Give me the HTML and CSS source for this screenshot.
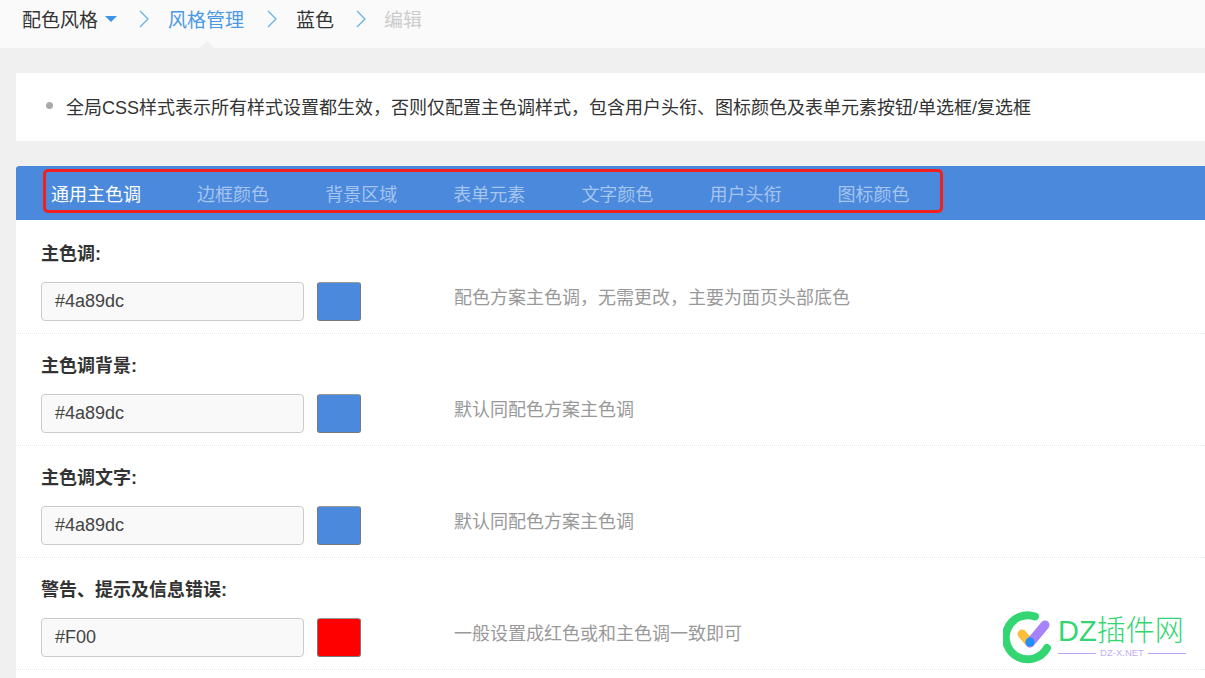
FILE: index.html
```html
<!DOCTYPE html>
<html lang="zh-CN">
<head>
  <meta charset="UTF-8" />
  <title>配色风格</title>
  <link rel="stylesheet" href="styles.css">
</head>
<body>
  <div class="crumbs">
    <span class="crumb">配色风格<i class="caret"></i></span>
    <svg class="sep" width="10" height="18" viewBox="0 0 10 18"><path d="M1 1l8 8-8 8" /></svg>
    <span class="crumb active">风格管理</span>
    <svg class="sep" width="10" height="18" viewBox="0 0 10 18"><path d="M1 1l8 8-8 8" /></svg>
    <span class="crumb">蓝色</span>
    <svg class="sep" width="10" height="18" viewBox="0 0 10 18"><path d="M1 1l8 8-8 8" /></svg>
    <span class="crumb muted">编辑</span>
    <i class="notch"></i>
  </div>

  <div class="main">
    <div class="tips">
      <i class="dot"></i>
      <span>全局CSS样式表示所有样式设置都生效，否则仅配置主色调样式，包含用户头衔、图标颜色及表单元素按钮/单选框/复选框</span>
    </div>

    <div class="panel">
      <div class="tabs">
        <span class="tab on">通用主色调</span>
        <span class="tab">边框颜色</span>
        <span class="tab">背景区域</span>
        <span class="tab">表单元素</span>
        <span class="tab">文字颜色</span>
        <span class="tab">用户头衔</span>
        <span class="tab">图标颜色</span>
        <div class="mark"></div>
      </div>

      <div class="row">
        <div class="label">主色调:</div>
        <div class="line">
          <div class="input">#4a89dc</div>
          <div class="swatch blue"></div>
          <div class="hint">配色方案主色调，无需更改，主要为面页头部底色</div>
        </div>
      </div>
      <div class="row">
        <div class="label">主色调背景:</div>
        <div class="line">
          <div class="input">#4a89dc</div>
          <div class="swatch blue"></div>
          <div class="hint">默认同配色方案主色调</div>
        </div>
      </div>
      <div class="row">
        <div class="label">主色调文字:</div>
        <div class="line">
          <div class="input">#4a89dc</div>
          <div class="swatch blue"></div>
          <div class="hint">默认同配色方案主色调</div>
        </div>
      </div>
      <div class="row">
        <div class="label">警告、提示及信息错误:</div>
        <div class="line">
          <div class="input">#F00</div>
          <div class="swatch red"></div>
          <div class="hint">一般设置成红色或和主色调一致即可</div>
        </div>
      </div>
    </div>
  </div>

  <!-- 水印 -->
  <div class="brand">
    <svg width="54" height="54" viewBox="0 0 54 54">
      <path class="ring" d="M32 6.5A22 22 0 1 0 44 38" />
      <path class="tick-a" d="M19 24l8 9" />
      <path class="tick-b" d="M27 33l15-18" />
      <circle class="tick-c" cx="27" cy="32" r="4.5" />
    </svg>
    <div class="brand-text">
      <div class="brand-name">DZ插件网</div>
      <div class="brand-sub"><i></i><span>DZ-X.NET</span><i></i></div>
    </div>
  </div>
</body>
</html>
```
FILE: styles.css
```css
html, body {
  height: 100%;
}

body {
  display: flex;
  flex-direction: column;
  margin: 0;
  background: #f0f0f0;
  color: #333;
  font-family: "Liberation Sans", "Noto Sans CJK SC", sans-serif;
  overflow: hidden;
}

/* 面包屑 */
.crumbs {
  position: relative;
  display: flex;
  align-items: center;
  height: 37px;
  padding: 0 0 11px 22px;
  background: #fafafa;
  font-size: 19px;
}

.crumb {
  display: flex;
  align-items: center;
}

.active { color: #4a98e6; margin-right: 1px; }
.muted { color: #ccc; margin-left: -1px; }

.caret {
  width: 0;
  height: 0;
  margin-left: 7px;
  border: 6px solid transparent;
  border-top-color: #3d94e4;
  border-bottom: 0;
}

.sep {
  margin: 0 19px 0 22px;
}

.sep path {
  fill: none;
  stroke: #5fb0e6;
  stroke-width: 1.2;
}

.notch {
  position: absolute;
  left: 200px;
  bottom: 0;
  width: 0;
  height: 0;
  border: 7px solid transparent;
  border-bottom-color: #f0f0f0;
  border-top: 0;
}

.main {
  flex: 1;
  display: flex;
  flex-direction: column;
  min-height: 0;
  padding: 25px 0 0 16px;
}

.tips {
  box-sizing: border-box;
  display: flex;
  align-items: center;
  flex: none;
  height: 68px;
  padding: 0 0 3px 30px;
  background: #fff;
  font-size: 18px;
}

.dot {
  width: 7px;
  height: 7px;
  margin-right: 13px;
  border-radius: 50%;
  background: #aaa;
}

.panel {
  flex: 1;
  min-height: 0;
  margin-top: 25px;
  background: #fff;
}

.tabs {
  position: relative;
  display: flex;
  gap: 56.1px;
  height: 54px;
  margin-bottom: 2px;
  padding-left: 35px;
  border-radius: 3px 0 0 0;
  background: #4a89dc;
  font-size: 18px;
  line-height: 58px;
  color: #a5c4ee;
}

.tab.on { color: #fff; }

.mark {
  position: absolute;
  left: 27px;
  top: 3px;
  width: 894px;
  height: 38px;
  border: 3px solid #f1201c;
  border-radius: 5px;
}

.row {
  box-sizing: border-box;
  height: 112px;
  padding-top: 20px;
  border-bottom: 1px dotted #dfe9ee;
}

.label {
  margin-left: 25px;
  height: 25px;
  font-size: 18px;
  font-weight: 700;
  line-height: 25px;
}

.line {
  display: flex;
  align-items: center;
  margin: 15px 0 0 25px;
}

.input {
  box-sizing: border-box;
  width: 263px;
  height: 39px;
  padding-left: 13px;
  border: 1px solid #ccc;
  border-radius: 4px;
  background: #f9f9f9;
  color: #444;
  font-size: 18px;
  line-height: 36px;
}

.swatch {
  box-sizing: border-box;
  width: 44px;
  height: 39px;
  margin-left: 13px;
  border: 1px solid #777;
  border-top-color: #999;
  border-radius: 3px;
}

.blue { background: #4a89dc; }
.red { background: #f00; }

.hint {
  margin-left: 93px;
  padding-bottom: 11px;
  color: #999;
  font-size: 18px;
}

/* 水印 */
.brand {
  position: absolute;
  left: 1003px;
  bottom: 14px;
  display: flex;
  gap: 1px;
}

.ring {
  fill: none;
  stroke: #34d673;
  stroke-width: 8;
  stroke-linecap: round;
}

.tick-a, .tick-b {
  fill: none;
  stroke-width: 9;
  stroke-linecap: round;
}

.tick-a { stroke: #fbbd3c; }
.tick-b { stroke: #a682fb; }
.tick-c { fill: #1e8ffb; }

.brand-text {
  width: 128px;
  padding-top: 4px;
}

.brand-name {
  color: #34d673;
  font-size: 29px;
  font-weight: 300;
  line-height: 34px;
  white-space: nowrap;
}

.brand-sub {
  display: flex;
  align-items: center;
  gap: 4px;
  color: #c2aef5;
  font-size: 9.5px;
  line-height: 10px;
}

.brand-sub i {
  flex: 1;
  height: 1px;
  background: #b9a2f7;
}
```
